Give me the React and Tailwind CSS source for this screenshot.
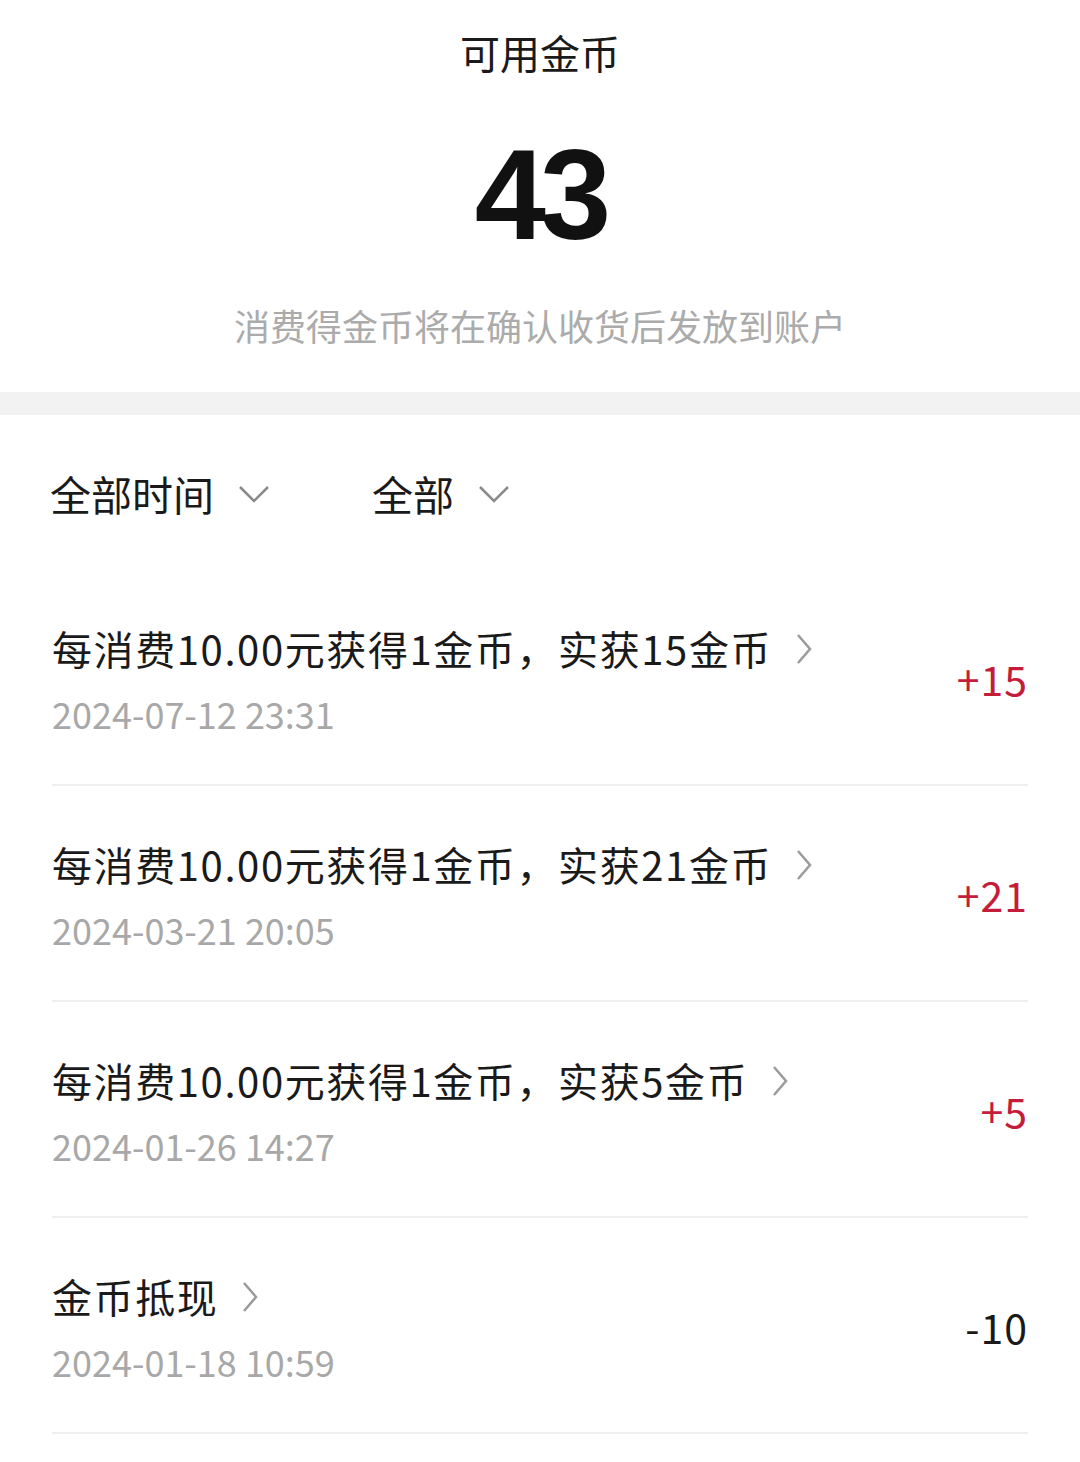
import React from 'react';

const records = [
  { title: '每消费10.00元获得1金币，实获15金币', time: '2024-07-12 23:31', amount: '+15', plus: true },
  { title: '每消费10.00元获得1金币，实获21金币', time: '2024-03-21 20:05', amount: '+21', plus: true },
  { title: '每消费10.00元获得1金币，实获5金币', time: '2024-01-26 14:27', amount: '+5', plus: true },
  { title: '金币抵现', time: '2024-01-18 10:59', amount: '-10', plus: false },
];

const ChevronDown = () => (
  <svg width="32" height="18" viewBox="0 0 32 18" fill="none" stroke="#8a8a8a" strokeWidth="2.5">
    <path d="M2 2 L16 16 L30 2" />
  </svg>
);

const ChevronRight = () => (
  <svg width="16" height="32" viewBox="0 0 16 32" fill="none" stroke="#9a9a9a" strokeWidth="2.5">
    <path d="M2 2 L14 16 L2 30" />
  </svg>
);

const App = () => {
  return (
    <div
      className="w-[1080px] h-[1462px] bg-white overflow-hidden"
      style={{ fontFamily: '"Noto Sans CJK SC", "Noto Sans", sans-serif' }}
    >
      {/* header */}
      <div className="h-[392px] flex flex-col items-center">
        <div className="mt-[27px] h-[50px] leading-[50px] text-[40px] text-[#1a1a1a]">可用金币</div>
        <div
          className="mt-[54px] h-[128px] leading-[128px] text-[128px] font-bold text-[#111] tracking-[-6px]"
          style={{ fontFamily: '"Liberation Sans", Arial, sans-serif' }}
        >
          43
        </div>
        <div className="mt-[41px] h-[50px] leading-[50px] text-[36px] text-[#ababab]">
          消费得金币将在确认收货后发放到账户
        </div>
      </div>
      <div className="h-[23px] bg-[#f2f2f2]" />

      {/* filters */}
      <div className="h-[155px] flex items-start px-[50px]">
        <div className="mt-[53px] flex items-center h-[50px]">
          <span className="text-[41px] leading-[50px] text-[#1a1a1a]">全部时间</span>
          <span className="ml-[24px] mt-[2px]"><ChevronDown /></span>
          <span className="ml-[102px] text-[41px] leading-[50px] text-[#1a1a1a]">全部</span>
          <span className="ml-[24px] mt-[2px]"><ChevronDown /></span>
        </div>
      </div>

      {/* list */}
      <div className="px-[52px]">
        {records.map((r) => (
          <div key={r.time} className="h-[216px] flex items-center border-b-2 border-[#efefef]">
            <div className="flex-1 flex flex-col pt-[6px]">
              <div className="flex items-center h-[50px]">
                <span className="text-[40px] leading-[50px] text-[#1a1a1a] tracking-[1.6px]">{r.title}</span>
                <span className="ml-[24px] mt-[2px]"><ChevronRight /></span>
              </div>
              <div className="mt-[15px] h-[50px] leading-[50px] text-[36px] text-[#a8a8a8]">
                {r.time}
              </div>
            </div>
            <div
              className={`text-[41px] leading-[50px] tracking-[1px] mt-[2px] ${r.plus ? 'text-[#c41d3a]' : 'text-[#1a1a1a]'}`}
            >
              {r.amount}
            </div>
          </div>
        ))}
      </div>
    </div>
  );
};

export default App;
